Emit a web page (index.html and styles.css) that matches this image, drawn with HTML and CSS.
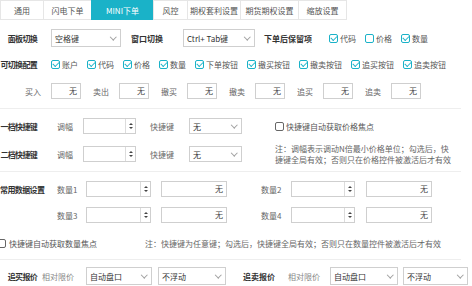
FILE: index.html
```html
<!DOCTYPE html>
<html lang="zh">
<head>
<meta charset="utf-8">
<title>MINI下单</title>
<link rel="stylesheet" href="styles.css">
</head>
<body>
<div class="tabs">
  <div class="tab t1">通用</div>
  <div class="tab t2">闪电下单</div>
  <div class="tab t3 active">MINI下单</div>
  <div class="tab t4">风控</div>
  <div class="tab t5">期权套利设置</div>
  <div class="tab t6">期货期权设置</div>
  <div class="tab t7">缩放设置</div>
</div>
<div class="content">
  <div class="row r1">
    <span class="lbl">面板切换</span>
    <span class="sel s-panel">空格键</span>
    <span class="b l-win">窗口切换</span>
    <span class="sel s-win">Ctrl+ Tab键</span>
    <span class="b l-keep">下单后保留项</span>
    <span class="checks c-keep">
      <span class="ck"><span class="cb on"></span>代码</span>
      <span class="ck"><span class="cb"></span>价格</span>
      <span class="ck"><span class="cb on"></span>数量</span>
    </span>
  </div>
  <div class="row r2">
    <span class="lbl">可切换配置</span>
    <span class="checks c-cfg">
      <span class="ck"><span class="cb on"></span>账户</span>
      <span class="ck"><span class="cb on"></span>代码</span>
      <span class="ck"><span class="cb on"></span>价格</span>
      <span class="ck"><span class="cb on"></span>数量</span>
      <span class="ck"><span class="cb on"></span>下单按钮</span>
      <span class="ck"><span class="cb on"></span>撤买按钮</span>
      <span class="ck"><span class="cb on"></span>撤卖按钮</span>
      <span class="ck"><span class="cb on"></span>追买按钮</span>
      <span class="ck"><span class="cb on"></span>追卖按钮</span>
    </span>
  </div>
  <div class="row r3">
    <span class="pair"><span class="t2c">买入</span><span class="inp i-key">无</span></span>
    <span class="pair"><span class="t2c">卖出</span><span class="inp i-key">无</span></span>
    <span class="pair"><span class="t2c">撤买</span><span class="inp i-key">无</span></span>
    <span class="pair"><span class="t2c">撤卖</span><span class="inp i-key">无</span></span>
    <span class="pair"><span class="t2c">追买</span><span class="inp i-key">无</span></span>
    <span class="pair"><span class="t2c">追卖</span><span class="inp i-key">无</span></span>
  </div>
  <div class="hr h1"></div>
  <div class="row r4">
    <span class="lbl">一档快捷键</span>
    <span class="t l-amp">调幅</span>
    <span class="spin sp-amp"><span class="field"></span><span class="arrows"><i class="up"></i><i class="dn"></i></span></span>
    <span class="t l-hot">快捷键</span>
    <span class="sel s-hot">无</span>
    <span class="ck c-auto"><span class="cb off"></span>快捷键自动获取价格焦点</span>
  </div>
  <div class="row r5">
    <span class="lbl">二档快捷键</span>
    <span class="t l-amp">调幅</span>
    <span class="spin sp-amp"><span class="field"></span><span class="arrows"><i class="up"></i><i class="dn"></i></span></span>
    <span class="t l-hot">快捷键</span>
    <span class="sel s-hot">无</span>
    <span class="note n-amp">注：调幅表示调动N倍最小价格单位；勾选后，快<br>捷键全局有效；否则只在价格控件被激活后才有效</span>
  </div>
  <div class="hr h2"></div>
  <div class="row r6">
    <span class="lbl wide">常用数据设置</span>
    <span class="t l-q1">数量1</span>
    <span class="spin sp-q1"><span class="field"></span><span class="arrows"><i class="up"></i><i class="dn"></i></span></span>
    <span class="inp i-q1">无</span>
    <span class="t l-q2">数量2</span>
    <span class="spin sp-q2"><span class="field"></span><span class="arrows"><i class="up"></i><i class="dn"></i></span></span>
    <span class="inp i-q2">无</span>
  </div>
  <div class="row r7">
    <span class="lbl"></span>
    <span class="t l-q1">数量3</span>
    <span class="spin sp-q1"><span class="field"></span><span class="arrows"><i class="up"></i><i class="dn"></i></span></span>
    <span class="inp i-q1">无</span>
    <span class="t l-q2">数量4</span>
    <span class="spin sp-q2"><span class="field"></span><span class="arrows"><i class="up"></i><i class="dn"></i></span></span>
    <span class="inp i-q2">无</span>
  </div>
  <div class="row r8">
    <span class="ck c-qty"><span class="cb off"></span>快捷键自动获取数量焦点</span>
    <span class="note n-qty">注：快捷键为任意键；勾选后，快捷键全局有效；否则只在数量控件被激活后才有效</span>
  </div>
  <div class="hr h3"></div>
  <div class="row r9">
    <span class="lbl">追买报价</span>
    <span class="t lt l-rel1">相对限价</span>
    <span class="sel s-a1">自动盘口</span>
    <span class="sel s-b1">不浮动</span>
    <span class="b l-sell">追卖报价</span>
    <span class="t lt l-rel2">相对限价</span>
    <span class="sel s-a2">自动盘口</span>
    <span class="sel s-b2">不浮动</span>
  </div>
</div>
</body>
</html>
```
FILE: styles.css
```css
* { box-sizing: border-box; }

body {
  margin: 0;
  width: 472px;
  height: 286px;
  overflow: hidden;
  background: #fff;
  font-family: "Noto Sans CJK SC", "Noto Sans", sans-serif;
  font-size: 8px;
  color: #666;
}

/* tabs */
.tabs { display: flex; height: 20px; }
.tab {
  flex: none;
  height: 20px;
  margin-left: -1px;
  border: 1px solid #e6e6e6;
  display: flex;
  align-items: center;
  justify-content: center;
  color: #555;
  background: #fff;
  white-space: nowrap;
}
.tab.t1 { margin-left: 0; width: 44px; }
.tab.t2 { width: 49px; }
.tab.t3 { width: 63px; }
.tab.t4 { width: 35px; }
.tab.t5 { width: 54px; }
.tab.t6 { width: 59px; }
.tab.t7 { width: 49px; }
.tab.active { background: #1ab2c8; border-color: #1ab2c8; color: #fff; }

/* content */
.content { margin-left: -3px; }
.row { display: flex; align-items: center; white-space: nowrap; }
.lbl {
  flex: none;
  width: 40px;
  padding-left: 3px;
  text-align: right;
  font-weight: bold;
  color: #333;
  letter-spacing: -0.7px;
}
.lbl.wide { text-align: left; letter-spacing: -0.6px; }
.b { flex: none; font-weight: bold; color: #333; }
.t { flex: none; color: #666; }
.lt { color: #888; }

/* select */
.sel {
  flex: none;
  height: 18px;
  border: 1px solid #cfcfcf;
  background: #fff;
  display: flex;
  align-items: center;
  padding: 0 5px 0 3px;
  color: #333;
}
.sel::after {
  content: "";
  margin-left: auto;
  width: 3.5px;
  height: 3.5px;
  border-right: 1px solid #a0a0a0;
  border-bottom: 1px solid #a0a0a0;
  transform: translateY(-1.5px) rotate(45deg);
}

/* checkbox */
.checks { display: flex; gap: 9px; flex: none; }
.ck { display: flex; align-items: center; color: #555; flex: none; }
.cb {
  flex: none;
  width: 9px;
  height: 9px;
  margin-right: 2px;
  border: 1px solid #1ab2c8;
  border-radius: 2px;
  background: #fff;
  display: flex;
  align-items: center;
  justify-content: center;
}
.cb.off { border-color: #666; }
.cb.on::after {
  content: "";
  width: 2.5px;
  height: 5px;
  border: solid #1ab2c8;
  border-width: 0 1.2px 1.2px 0;
  transform: translateY(-0.6px) rotate(45deg);
}

/* text inputs */
.inp {
  flex: none;
  height: 16px;
  border: 1px solid #cfcfcf;
  background: #fff;
  text-align: right;
  padding-right: 3px;
  line-height: 14px;
  color: #444;
}

/* spinner */
.spin {
  flex: none;
  height: 16px;
  border: 1px solid #cfcfcf;
  background: #fff;
  display: flex;
}
.spin .field { flex: 1; }
.spin .arrows {
  flex: none;
  width: 10px;
  border-left: 1px solid #dcdcdc;
  display: flex;
  flex-direction: column;
  align-items: center;
  justify-content: center;
  gap: 2px;
}
.arrows i { display: block; width: 0; height: 0; border-left: 2px solid transparent; border-right: 2px solid transparent; }
.arrows .up { border-bottom: 2.5px solid #444; }
.arrows .dn { border-top: 2.5px solid #444; }

.note { flex: none; color: #666; }

.hr { height: 1px; width: 464px; background: #eeeeee; }

/* row 1 */
.r1 { height: 18px; margin-top: 9px; }
.s-panel { margin-left: 14px; width: 70px; }
.l-win { margin-left: 10px; width: 32px; }
.s-win { margin-left: 20px; width: 72px; }
.l-keep { margin-left: 9px; }
.c-keep { margin-left: 17px; }

/* row 2 */
.r2 { height: 18px; margin-top: 8px; }
.c-cfg { margin-left: 14px; }

/* row 3 */
.r3 { height: 16px; margin-top: 10px; padding-left: 28px; gap: 12px; }
.pair { display: flex; align-items: center; flex: none; }
.t2c { width: 16px; color: #666; }
.i-key { margin-left: 10px; width: 30px; }

.h1 { margin-top: 9px; }

/* rows 4 and 5 */
.r4 { height: 16px; margin-top: 9px; }
.r5 { height: 22px; margin-top: 9px; }
.l-amp { margin-left: 20px; width: 16px; }
.sp-amp { margin-left: 10px; width: 53px; }
.l-hot { margin-left: 14px; width: 24px; }
.s-hot { margin-left: 15px; width: 53px; height: 16px; }
.c-auto { margin-left: 33px; }
.n-amp { margin-left: 33px; line-height: 11px; }

.h2 { margin-top: 6px; }

/* rows 6 and 7 */
.r6 { height: 16px; margin-top: 9px; }
.r7 { height: 16px; margin-top: 10px; }
.l-q1 { margin-left: 20px; width: 20px; }
.sp-q1 { margin-left: 9px; width: 65px; }
.i-q1 { margin-left: 10px; width: 66px; }
.l-q2 { margin-left: 34px; width: 20px; }
.sp-q2 { margin-left: 10px; width: 64px; }
.i-q2 { margin-left: 11px; width: 66px; }

/* row 8 */
.r8 { height: 12px; margin-top: 14px; }
.c-qty .cb { margin-right: 3px; }
.n-qty { margin-left: 48px; }

.h3 { margin-top: 10px; }

/* row 9 */
.r9 { height: 18px; margin-top: 7px; }
.l-rel1 { margin-left: 5px; width: 32px; }
.s-a1 { margin-left: 12px; width: 66px; }
.s-b1 { margin-left: 6px; width: 68px; }
.l-sell { margin-left: 17px; width: 32px; }
.l-rel2 { margin-left: 13px; width: 32px; }
.s-a2 { margin-left: 10px; width: 68px; }
.s-b2 { margin-left: 5px; width: 65px; }
```
